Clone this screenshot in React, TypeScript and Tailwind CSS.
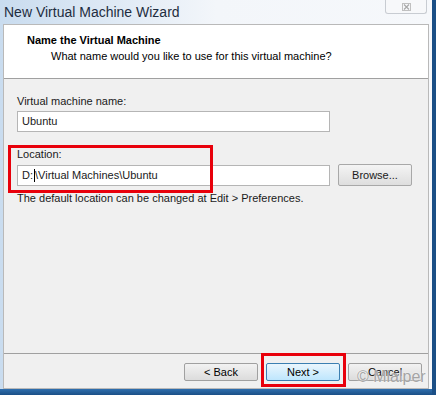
import React from 'react'

const font = { fontFamily: '"Liberation Sans", Arial, sans-serif' }

function Btn({ label, active }: { label: string; active?: boolean }) {
    return (
        <div
            className={`flex h-[18px] w-[74px] items-center justify-center rounded-[2px] border text-[11px] ${active ? 'border-[#3c7fb1] bg-gradient-to-b from-[#eaf6fd] to-[#bee6fd]' : 'border-[#a0a0a0] bg-gradient-to-b from-[#f2f2f2] to-[#dcdcdc]'} text-black`}
        >
            {label}
        </div>
    )
}

export default function App() {
    return (
        <div className="relative flex h-[395px] w-[436px] overflow-hidden bg-[#1b4f86]" style={font}>
            <div className="flex w-[432px] flex-col bg-gradient-to-r from-[#c9dcef] via-[#f3f6fa] to-[#f6f8fb]">
                {/* Title bar */}
                <div className="relative flex h-[24px] items-center pl-[4px]">
                    <span className="text-[14px] leading-none text-[#1e2d40]">New Virtual Machine Wizard</span>
                    <div className="absolute right-[5px] top-0 flex h-[14px] w-[42px] items-center justify-center rounded-b-[3px] border border-t-0 border-[#c8ccd2] bg-[#f7f8fa]">
                        <svg width="9" height="8" viewBox="0 0 9 8">
                            <rect x="0.5" y="0.5" width="8" height="7" fill="none" stroke="#c0c0c0" />
                            <path d="M2 1.5 L7 6.5 M7 1.5 L2 6.5" stroke="#a8a8a8" strokeWidth="1.2" />
                        </svg>
                    </div>
                </div>

                {/* Dialog panel */}
                <div className="ml-[3px] mr-[3px] flex flex-1 flex-col border border-[#b9b9b9] bg-[#f0f0f0]">
                    <div className="flex h-[54px] flex-col border-b border-[#a0a0a0] bg-white pl-[23px] pt-[7px]">
                        <span className="text-[11px] font-bold leading-[16px] text-black">Name the Virtual Machine</span>
                        <span className="pl-[24px] text-[11px] leading-[16px] text-black">What name would you like to use for this virtual machine?</span>
                    </div>

                    <div className="flex flex-1 flex-col px-[13px] pt-[14px] text-[11px] text-[#1a1a1a]">
                        <span className="leading-[16px]">Virtual machine name:</span>
                        <div className="mt-[2px] flex h-[21px] w-[313px] items-center border border-[#b5b5b5] bg-white pl-[4px]">Ubuntu</div>

                        <span className="mt-[14px] leading-[16px]">Location:</span>
                        <div className="mt-[2px] flex items-center gap-[8px]">
                            <div className="flex h-[21px] w-[313px] items-center border border-[#b5b5b5] bg-white pl-[4px]">
                                D:<span className="mx-[0.5px] inline-block h-[13px] w-px bg-black" />\Virtual Machines\Ubuntu
                            </div>
                            <div className="flex h-[22px] w-[74px] items-center justify-center rounded-[2px] border border-[#a8a8a8] bg-gradient-to-b from-[#f4f4f4] to-[#dedede]">
                                Browse...
                            </div>
                        </div>
                        <span className="mt-[4px] leading-[16px]">The default location can be changed at Edit &gt; Preferences.</span>
                    </div>

                    <div className="flex h-[35px] items-start justify-end gap-[8px] border-t border-[#a0a0a0] pr-[6px] pt-[9px]">
                        <Btn label="< Back" />
                        <Btn label="Next >" active />
                        <Btn label="Cancel" />
                    </div>
                </div>
                <div className="h-[6px] bg-gradient-to-b from-[#2f6fae] to-[#1b4f86]" />
            </div>

            {/* annotations */}
            <div className="absolute left-[8px] top-[145px] h-[48px] w-[205px] border-[3px] border-[#e8000b]" />
            <div className="absolute left-[261px] top-[353px] h-[34px] w-[85px] border-[3px] border-[#e8000b]" />
            <span className="absolute left-[357px] top-[369px] text-[16px] leading-none text-[#a4a4a4] [text-shadow:0_0_2px_#ffffff]">
                © Mialper
            </span>
        </div>
    )
}
